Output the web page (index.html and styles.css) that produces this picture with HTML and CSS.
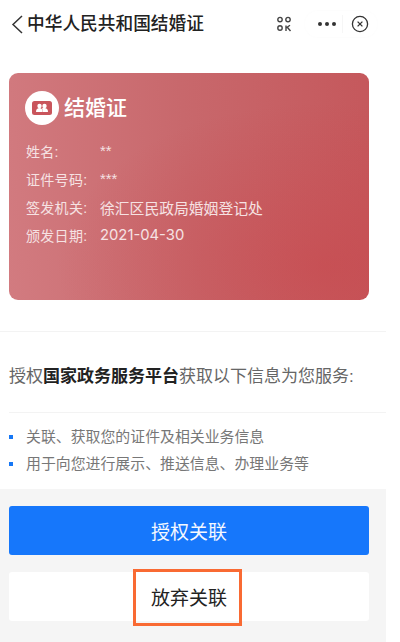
FILE: index.html
```html
<!DOCTYPE html>
<html lang="zh-CN">
<head>
<meta charset="utf-8">
<title>中华人民共和国结婚证</title>
<link rel="stylesheet" href="styles.css">
</head>
<body>
<div class="page">
  <header class="nav">
    <svg class="back" viewBox="0 0 14 20" width="14" height="20"><path d="M12 2 L3 10.5 L12 19" fill="none" stroke="#333" stroke-width="1.5"/></svg>
    <h1 class="nav-title">中华人民共和国结婚证</h1>
    <svg class="scan" viewBox="0 0 16 16" width="16" height="16"><g fill="none" stroke="#444" stroke-width="1.4"><circle cx="4" cy="3.6" r="2.2"/><circle cx="12" cy="3.6" r="2.2"/><circle cx="4" cy="12" r="2.2"/></g><path d="M10 9.5v5.5M10 12l4-2.8M11.5 11.5l3 3.5" fill="none" stroke="#444" stroke-width="1.4"/></svg>
    <div class="capsule">
      <span class="dots"><i></i><i></i><i></i></span>
      <span class="cap-sep"></span>
      <svg class="close" viewBox="0 0 18 18" width="18" height="18"><circle cx="9" cy="9" r="7.6" fill="none" stroke="#333" stroke-width="1.3"/><path d="M6.6 6.6l4.8 4.8M11.4 6.6l-4.8 4.8" stroke="#333" stroke-width="1.3"/></svg>
    </div>
  </header>

  <section class="card">
    <div class="card-head">
      <span class="badge">
        <svg viewBox="0 0 20 14" width="20" height="14"><rect width="20" height="14" rx="2.5" fill="#c9555c"/><circle cx="7.5" cy="5" r="2.2" fill="#fff"/><circle cx="12.5" cy="5" r="2.2" fill="#fff"/><path d="M4 11c0-3 1.500-4 3.500-4s3 1 3 4zM10.800 11c0-2-.4-3-1-3.600.8-.4 1.800-.4 2.700-.4 2 0 3.500 1 3.500 4z" fill="#fff"/></svg>
      </span>
      <span class="card-title">结婚证</span>
    </div>
    <dl class="fields">
      <div class="field"><dt>姓名:</dt><dd>**</dd></div>
      <div class="field"><dt>证件号码:</dt><dd>***</dd></div>
      <div class="field"><dt>签发机关:</dt><dd>徐汇区民政局婚姻登记处</dd></div>
      <div class="field"><dt>颁发日期:</dt><dd class="date">2021-04-30</dd></div>
    </dl>
  </section>

  <p class="auth">授权<strong>国家政务服务平台</strong>获取以下信息为您服务:</p>

  <ul class="perms">
    <li>关联、获取您的证件及相关业务信息</li>
    <li>用于向您进行展示、推送信息、办理业务等</li>
  </ul>

  <footer class="actions">
    <button class="btn btn-primary">授权关联</button>
    <button class="btn btn-plain">放弃关联<span class="highlight"></span></button>
  </footer>
</div>
</body>
</html>
```

FILE: styles.css
```css
* { box-sizing: border-box; }
html, body { margin: 0; padding: 0; background: #fff; }
body {
  width: 400px;
  height: 642px;
  overflow: hidden;
  font-family: "Liberation Sans", "Noto Sans CJK SC", sans-serif;
}
.page { width: 386px; height: 642px; display: flex; flex-direction: column; }

.nav { width: 400px; height: 50px; padding: 0 0 0 10px; display: flex; align-items: center; }
.back { flex: none; margin-top: -2px; }
.nav-title { margin: -2px 0 0 3px; font-size: 17.7px; font-weight: 500; color: #222; line-height: 24px; white-space: nowrap; }
.scan { margin: -2px 0 0 72px; flex: none; }
.capsule { margin: -2px 0 0 13px; width: 72px; height: 26px; display: flex; align-items: center; border-radius: 13px; box-shadow: 0 0 3px #fafafa; padding-left: 13px; }
.dots { display: flex; gap: 3px; width: 18px; flex: none; }
.dots i { width: 4px; height: 4px; border-radius: 50%; background: #333; }
.cap-sep { width: 1px; height: 18px; background: #f6f6f6; margin-left: 6px; }
.close { margin-left: 8px; flex: none; }

.card {
  margin: 23px 17px 0 9px;
  height: 227px;
  border-radius: 9px;
  padding: 17px 0 0 17px;
  color: #fff;
  background:
    radial-gradient(ellipse at 88% 85%, rgba(200, 70, 75, 0.55), rgba(200, 70, 75, 0) 60%),
    linear-gradient(85deg, #d27b80 0%, #c8686c 50%, #c5585c 100%);
}
.card-head { display: flex; align-items: center; gap: 5px; margin-left: -1px; }
.badge { width: 34px; height: 34px; border-radius: 50%; background: #fff; display: flex; align-items: center; justify-content: center; flex: none; }
.card-title { font-size: 21px; line-height: 36px; font-weight: 500; }
.fields { margin: 11px 0 0; }
.field { display: flex; height: 28px; align-items: center; font-size: 14px; color: #f6e2e3; }
.field dt { width: 74px; flex: none; letter-spacing: 0.3px; }
.field dd { margin: 0; font-size: 14.8px; }
.field .date { font-family: "Inter", sans-serif; }

.auth {
  margin: 31px 0 0;
  border-top: 1px solid #f3f3f3;
  padding: 33px 0 24px 9px;
  height: 81px;
  font-size: 17px;
  line-height: 23px;
  color: #666;
  white-space: nowrap;
}
.auth strong { color: #222; font-weight: 700; }

.perms { margin: 0; list-style: none; padding: 12px 0 0 9px; height: 77px; position: relative; }
.perms::before { content: ""; position: absolute; left: 9px; right: 0; top: 0; border-top: 1px solid #f3f3f3; }
.perms li { position: relative; padding-left: 17px; font-size: 14.9px; line-height: 27px; color: #777; white-space: nowrap; }
.perms li::before { content: ""; position: absolute; left: 0; top: 11px; width: 4px; height: 4px; background: #1677f5; }

.actions { flex: 1; background: #f5f5f5; padding: 17px 17px 0 9px; display: flex; flex-direction: column; gap: 17px; }
.btn {
  display: block;
  width: 100%;
  height: 49px;
  border: 0;
  border-radius: 3px;
  font: inherit;
  font-size: 19px;
  position: relative;
}
.btn-primary { background: #1677fb; color: #f4f8ff; }
.btn-plain { background: #fff; color: #222; }
.highlight { position: absolute; left: 124px; top: -3px; width: 109px; height: 57px; border: 3px solid #f96a33; }
```
